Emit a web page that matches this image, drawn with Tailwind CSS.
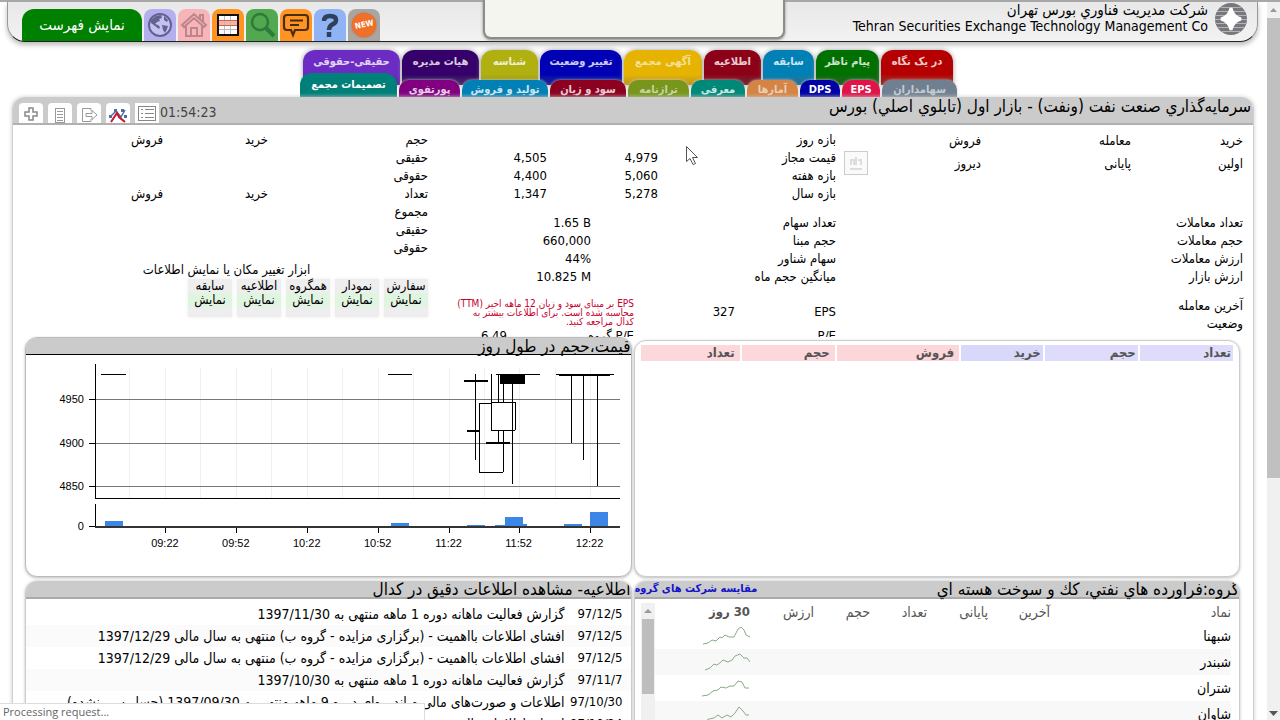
<!DOCTYPE html>
<html lang="fa">
<head>
    <meta charset="UTF-8">
    <meta name="viewport" content="width=device-width, initial-scale=1.0">
    <title>سرمایه‌گذاری صنعت نفت (ونفت)</title>
    <script src="https://cdn.jsdelivr.net/npm/@tailwindcss/browser@4"></script>
</head>
<body class="relative flex h-screen overflow-hidden bg-white text-black text-[13px] leading-[18px] font-['DejaVu_Sans_Condensed','DejaVu_Sans',sans-serif]">

    <div class="flex-1 min-w-0 overflow-hidden border-t-2 border-[#a8a8a8]">

        <!-- Top bar -->
        <header class="ml-[7px] mr-[9px] h-10 flex items-end justify-between pl-[14px] pr-[9px] bg-linear-to-b from-[#e8e8e8] to-[#f2f2f2] border border-t-0 border-[#999] border-b-[#222] rounded-b-[18px] shadow-[0_3px_5px_#bbb]">
            <nav class="flex items-end gap-[2px]">
                <button class="w-[120px] h-8 rounded-t-xl bg-[#008000] text-white text-[15px]">نمایش فهرست</button>
                <button aria-label="بازار" class="w-8 h-8 rounded-t-lg bg-[#b4b0f0] flex items-center justify-center">
                    <svg width="26" height="26" viewBox="0 0 26 26"><circle cx="13" cy="13" r="11" fill="#c3c0f2" stroke="#62628e" stroke-width="2"/><path d="M4 8l5-4 5-1 1 3-3 1 1 2-3 1-2 2 3 1 2 2-1 2-4-3-4-3zM17 4l4 4-1 2-3-2zM15 13l6 1-1 3-2 4-2-3z" fill="#62628e"/></svg>
                </button>
                <button aria-label="خانه" class="w-8 h-8 rounded-t-lg bg-[#f7b5ba] flex items-center justify-center">
                    <svg width="28" height="28" viewBox="0 0 28 28" fill="none" stroke="#bd868b" stroke-width="2"><path d="M2 14L14 3l12 11-2 2L14 7 4 16zM6 15v10h16V15M20 8V4h3v7"/><path d="M11 25v-8h6v8"/></svg>
                </button>
                <button aria-label="جدول" class="w-8 h-8 rounded-t-lg bg-[#ff9423] flex items-center justify-center">
                    <svg width="22" height="22" viewBox="0 0 22 22"><rect x="1" y="1" width="20" height="20" fill="#fff" stroke="#111" stroke-width="2"/><path d="M2 7h18v4H2z" fill="#f3b5a5"/><path d="M7.500 2v18M13.500 2v18M2 15.500h18" stroke="#bbb"/><path d="M2 6.500h18M2 11.500h18" stroke="#d4624c"/></svg>
                </button>
                <button aria-label="جستجو" class="w-8 h-8 rounded-t-lg bg-[#51a851] flex items-center justify-center">
                    <svg width="28" height="28" viewBox="0 0 28 28" fill="none" stroke="#2f7a38"><circle cx="12" cy="11" r="8" stroke-width="2.500"/><path d="M18 17l8 8" stroke-width="4"/></svg>
                </button>
                <button aria-label="پیام" class="w-8 h-8 rounded-t-lg bg-[#ff9423] flex items-center justify-center">
                    <svg width="28" height="28" viewBox="0 0 28 28" fill="none" stroke="#4a2c10" stroke-width="2.200"><path d="M5 4h18q3 0 3 3v9q0 3-3 3H13l-2 5-2-5H5q-3 0-3-3V7q0-3 3-3z"/><path d="M8 9.500h13M8 14h9"/></svg>
                </button>
                <button aria-label="راهنما" class="w-8 h-8 rounded-t-lg bg-[#8fb3f5] flex items-center justify-center">
                    <svg width="24" height="28" viewBox="0 0 24 28" fill="none" stroke="#30405c" stroke-width="4.500"><path d="M6 10q0-5 6-5t6 4q0 3-3 4-4 2-4 6"/><path d="M11 21v5"/></svg>
                </button>
                <button aria-label="جدید" class="w-8 h-8 rounded-t-lg bg-[#a9a5a3] flex items-center justify-center">
                    <span class="w-6 h-6 rounded-full bg-[#f0702a] shadow-[0_0_2px_#c50] flex items-center justify-center"><span class="-rotate-12 text-white text-[8px] font-bold">NEW</span></span>
                </button>
            </nav>
            <div class="flex items-start gap-[6px] h-full">
                <div dir="rtl" class="text-[14px] leading-4">
                    <p class="text-[15px]">شرکت مدیریت فناوري بورس تهران</p>
                    <p dir="ltr">Tehran Securities Exchange Technology Management Co</p>
                </div>
                <svg width="34" height="34" viewBox="0 0 34 34"><circle cx="17" cy="17" r="16" fill="#77777d"/><path d="M3 9.500h28M1 13.500h32M1 17.500h32M1 21.500h32M3 25.500h28M7 5.500h20M8 29.500h18" stroke="#b4b4b8"/><path d="M17 6q2 9 10 11-8 2-10 11-2-9-10-11 8-2 10-11z" fill="#fff" stroke="#fff" stroke-width="3"/></svg>
            </div>
        </header>

        <!-- Tabs -->
        <nav class="mt-2 ml-[300px] w-[657px] text-[11px] font-bold text-white/80 whitespace-nowrap">
            <div class="flex gap-[2px] ml-[3px] h-[35px]">
                <button class="w-[97px] pb-3 rounded-t-xl bg-linear-to-b from-[#6c2cc4] from-70% to-[#5a2a9c] shadow-[0_0_5px_#999]">حقیقی-حقوقی</button>
                <button class="w-[77px] pb-3 rounded-t-xl bg-linear-to-b from-[#35006a] from-70% to-[#4b2c68] shadow-[0_0_5px_#999]">هیات مدیره</button>
                <button class="w-[57px] pb-3 rounded-t-xl bg-linear-to-b from-[#b0b010] from-70% to-[#8c8c1c] shadow-[0_0_5px_#999]">شناسه</button>
                <button class="w-[82px] pb-3 rounded-t-xl bg-linear-to-b from-[#0000b4] from-70% to-[#20208c] shadow-[0_0_5px_#999]">تغییر وضعیت</button>
                <button class="w-[78px] pb-3 rounded-t-xl bg-linear-to-b from-[#e6b400] from-70% to-[#b8941c] shadow-[0_0_5px_#999] text-white/60">آگهی مجمع</button>
                <button class="w-[57px] pb-3 rounded-t-xl bg-linear-to-b from-[#8c0018] from-70% to-[#6c2430] shadow-[0_0_5px_#999]">اطلاعیه</button>
                <button class="w-[51px] pb-3 rounded-t-xl bg-linear-to-b from-[#0080b4] from-70% to-[#286c8c] shadow-[0_0_5px_#999]">سابقه</button>
                <button class="w-[63px] pb-3 rounded-t-xl bg-linear-to-b from-[#007000] from-70% to-[#245c24] shadow-[0_0_5px_#999]">پیام ناظر</button>
                <button class="w-[72px] pb-3 rounded-t-xl bg-linear-to-b from-[#b40000] from-70% to-[#8c2828] shadow-[0_0_5px_#999]">در یک نگاه</button>
            </div>
            <div class="relative flex items-end gap-[2px] -mt-3 h-6 leading-[14px]">
                <button class="w-[97px] h-full rounded-t-xl bg-[#008078] text-white">تصمیمات مجمع</button>
                <button class="w-[61px] h-[17px] pt-[3px] rounded-t-[10px] bg-[#800080] shadow-[0_0_3px_#ccc]">پورتفوی</button>
                <button class="w-[86px] h-[17px] pt-[3px] rounded-t-[10px] bg-[#0080b4] shadow-[0_0_3px_#ccc]">تولید و فروش</button>
                <button class="w-[76px] h-[17px] pt-[3px] rounded-t-[10px] bg-[#8c0020] shadow-[0_0_3px_#ccc]">سود و زیان</button>
                <button class="w-[61px] h-[17px] pt-[3px] rounded-t-[10px] bg-[#78961c] shadow-[0_0_3px_#ccc] text-white/60">ترازنامه</button>
                <button class="w-[54px] h-[17px] pt-[3px] rounded-t-[10px] bg-[#008878] shadow-[0_0_3px_#ccc]">معرفی</button>
                <button class="w-[51px] h-[17px] pt-[3px] rounded-t-[10px] bg-[#d48444] shadow-[0_0_3px_#ccc] text-white/60">آمارها</button>
                <button class="w-[40px] h-[17px] pt-[3px] rounded-t-[10px] bg-[#0000a4] text-white shadow-[0_0_3px_#ccc]">DPS</button>
                <button class="w-[38px] h-[17px] pt-[3px] rounded-t-[10px] bg-[#e01448] text-white shadow-[0_0_3px_#ccc]">EPS</button>
                <button class="w-[75px] h-[17px] pt-[3px] rounded-t-[10px] bg-[#708090] shadow-[0_0_3px_#ccc] text-white/60">سهامداران</button>
            </div>
        </nav>

        <!-- Instrument window -->
        <main class="relative ml-3 mr-[13px] border-x border-[#d0d0d0] rounded-t-xl shadow-[0_0_4px_#ccc]">
            <div class="flex justify-between h-7 bg-[#cbcbcb] border-b-2 border-[#b0b0b0] rounded-t-xl pl-[6px] pr-[2px]">
                <div class="flex items-end gap-[5px]">
                    <button aria-label="افزودن" class="w-6 h-5 rounded-t-sm bg-white flex items-center justify-center"><svg width="16" height="16" viewBox="0 0 16 16" fill="none" stroke="#888" stroke-width="1.500"><path d="M6 3h4v4h4v4h-4v4H6v-4H2V7h4z"/></svg></button>
                    <button aria-label="ماشین حساب" class="w-6 h-5 rounded-t-sm bg-white flex items-end justify-center"><svg width="12" height="16" viewBox="0 0 12 16" fill="none" stroke="#999"><rect x="1.500" y="1.500" width="9" height="14"/><path d="M3 4.500h6M3 7.500h6M3 10.500h6M3 13.500h6"/></svg></button>
                    <button aria-label="خروجی" class="w-6 h-5 rounded-t-sm bg-white flex items-end justify-center"><svg width="18" height="16" viewBox="0 0 18 16" fill="none" stroke="#999"><path d="M11 4V1.500H2.500v13H11V12"/><path d="M6 6.500h6v-3l5 4.500-5 4.500v-3H6z"/></svg></button>
                    <button aria-label="نمودار" class="w-6 h-5 rounded-t-sm bg-white flex items-end justify-center"><svg width="18" height="16" viewBox="0 0 18 16" fill="none"><path d="M2 9L7 4l5 6 4-7" stroke="#4a6ea8" stroke-width="1.500"/><path d="M2 15l6-9 2 4 6 5" stroke="#c8142c" stroke-width="2"/><path d="M0 8h3v3H0zM5 2h3v3H5zM12 2h3v3h-3zM15 8h3v3h-3z" fill="#4a6ea8"/></svg></button>
                    <button aria-label="فهرست" class="w-6 h-5 bg-white flex items-center justify-center"><svg width="20" height="17" viewBox="0 0 20 17" fill="none" stroke="#888"><rect x="1.500" y="1.500" width="17" height="14"/><path d="M4 4.500h2M4 8.500h2M4 12.500h2M8 4.500h9M8 8.500h9M8 12.500h9"/></svg></button>
                    <span class="text-[14px] leading-[22px] text-[#444] -ml-1">01:54:23</span>
                </div>
                <h1 dir="rtl" class="text-[17px] leading-[18px]">سرمایه‌گذاري صنعت نفت (ونفت) - بازار اول (تابلوي اصلي) بورس</h1>
            </div>

            <!-- Summary -->
            <section dir="rtl" class="grid grid-cols-[399fr_400fr_403fr] gap-x-2 h-[212px] overflow-hidden pt-1 pr-[10px] pl-3">
                <div>
                    <div class="flex">
                        <table class="flex-1 table-fixed">
                            <tr class="h-[22px]"><td class="w-[112px]">خرید</td><td class="w-[150px]">معامله</td><td class="w-[113px]">فروش</td></tr>
                            <tr class="h-[22px]"><td>اولین</td><td>پایانی</td><td>دیروز</td></tr>
                        </table>
                        <button aria-label="نمودار کوچک" class="mt-[22px] w-6 h-6 border border-[#ccc] bg-[#fafafa] flex items-center justify-center"><svg width="16" height="16" viewBox="0 0 16 16" fill="none" stroke="#ddd" stroke-width="2"><path d="M3 10V5h3v5M8 10V2M13 10V5h-3M2 14h12"/></svg></button>
                    </div>
                    <table class="mt-[39px]">
                        <tr><td>تعداد معاملات</td></tr>
                        <tr><td>حجم معاملات</td></tr>
                        <tr><td>ارزش معاملات</td></tr>
                        <tr><td>ارزش بازار</td></tr>
                    </table>
                    <table class="mt-[11px]">
                        <tr><td>آخرین معامله</td></tr>
                        <tr><td>وضعیت</td></tr>
                    </table>
                </div>
                <div class="pt-[2px]">
                    <table>
                        <tr><td class="w-[178px]">بازه روز</td><td class="w-[111px]"></td><td></td></tr>
                        <tr><td>قیمت مجاز</td><td>4,979</td><td>4,505</td></tr>
                        <tr><td>بازه هفته</td><td>5,060</td><td>4,400</td></tr>
                        <tr><td>بازه سال</td><td>5,278</td><td>1,347</td></tr>
                    </table>
                    <table class="mt-[11px]">
                        <tr><td class="w-[245px]">تعداد سهام</td><td><bdi dir="ltr">1.65 B</bdi></td></tr>
                        <tr><td>حجم مبنا</td><td>660,000</td></tr>
                        <tr><td>سهام شناور</td><td><bdi dir="ltr">44%</bdi></td></tr>
                        <tr><td>میانگین حجم ماه</td><td><bdi dir="ltr">10.825 M</bdi></td></tr>
                    </table>
                    <table class="mt-[11px] w-full table-fixed">
                        <colgroup><col class="w-[101px]"><col class="w-[101px]"><col class="w-[127px]"><col></colgroup>
                        <tr class="h-[30px]"><td>EPS</td><td>327</td><td colspan="2" class="text-[10px] leading-[9px] text-[#c8002c]">EPS بر مبنای سود و زیان 12 ماهه اخیر (TTM)<br>محاسبه شده است. برای اطلاعات بیشتر به<br>کدال مراجعه کنید.</td></tr>
                        <tr><td>P/E</td><td></td><td>P/E گروه</td><td>6.49</td></tr>
                    </table>
                </div>
                <div class="pt-[2px]">
                    <table>
                        <tr><td class="w-[160px]">حجم</td><td class="w-[105px]">خرید</td><td>فروش</td></tr>
                        <tr><td>حقیقی</td></tr>
                        <tr><td>حقوقی</td></tr>
                        <tr><td>تعداد</td><td>خرید</td><td>فروش</td></tr>
                        <tr><td>مجموع</td></tr>
                        <tr><td>حقیقی</td></tr>
                        <tr><td>حقوقی</td></tr>
                    </table>
                    <p class="mt-1 text-center">ابزار تغییر مکان یا نمایش اطلاعات</p>
                    <div class="flex gap-[5px] leading-[14px]">
                        <button class="w-11 h-[38px] pb-[10px] bg-[#eee] shadow-[0_0_4px_#eee]">سفارش<span class="block bg-[#e0f5e0]">نمایش</span></button>
                        <button class="w-11 h-[38px] pb-[10px] bg-[#eee] shadow-[0_0_4px_#eee]">نمودار<span class="block bg-[#e0f5e0]">نمایش</span></button>
                        <button class="w-11 h-[38px] pb-[10px] bg-[#eee] shadow-[0_0_4px_#eee]">همگروه<span class="block bg-[#e0f5e0]">نمایش</span></button>
                        <button class="w-11 h-[38px] pb-[10px] bg-[#eee] shadow-[0_0_4px_#eee]">اطلاعیه<span class="block bg-[#e0f5e0]">نمایش</span></button>
                        <button class="w-11 h-[38px] pb-[10px] bg-[#eee] shadow-[0_0_4px_#eee]">سابقه<span class="block bg-[#e0f5e0]">نمایش</span></button>
                    </div>
                </div>
            </section>

            <!-- Boxes -->
            <div class="grid grid-cols-2 gap-x-[2px] gap-y-1 ml-3 mr-[13px]">
                <section class="bg-white border border-[#bbb] rounded-xl shadow-[0_1px_3px_#bbb] overflow-hidden">
                    <h2 dir="rtl" class="h-[17px] text-[17px] leading-4 bg-[#cbcbcb] border-b border-black">قیمت،حجم در طول روز</h2>
                    <svg class="block w-full mt-px" viewBox="0 0 605 220" shape-rendering="crispEdges" fill="none" stroke="#000" font-family="Liberation Sans" font-size="11">
                        <path stroke="#f0f0f0" d="M103.500 12v130M139.500 12v130M174.500 12v130M210.500 12v130M245.500 12v130M281.500 12v130M316.500 12v130M352.500 12v130M387.500 12v130M423.500 12v130M458.500 12v130M493.500 12v130M529.500 12v130M564.500 12v130"/>
                        <path stroke="#777" d="M70 43.500h524M70 87.500h524M70 130.500h524"/>
                        <path d="M69.500 8v134M69 142.500h525M63 43.500h7M63 87.500h7M63 130.500h7M69.500 148v23M63 170.500h7M139.500 171v6M210.500 171v6M281.500 171v6M352.500 171v6M423.500 171v6M493.500 171v6M564.500 171v6"/>
                        <g fill="#3c86e8" stroke="none"><path d="M79 165h18v5H79zM365 167h18v4h-18zM441 169h18v2h-18zM469 169h18v2h-18zM479 161h18v10h-18zM497 168h4v3h-4zM538 168h18v3h-18zM564 156h18v15h-18z"/></g>
                        <path stroke="#333" stroke-width="2" d="M69 171h525"/>
                        <path d="M75 18.500h25M362 18.500h24M449.500 18v86M465.500 18v28M472.500 18v28M477.500 18v28M472.500 74v13M477.500 74v13M470 18.500h44M530 18.500h58M545.500 19v68M557.500 19v85M571.500 19v111"/>
                        <path d="M453.500 47.500h24v69h-24z"/>
                        <path fill="#fff" d="M465.500 46.500h24v28h-24z"/>
                        <path d="M486.500 18v110"/>
                        <path stroke-width="2" d="M438 25h24M441 75h12M460 87h24M533 19h51"/>
                        <path fill="#000" stroke="none" d="M474 19h25v9h-25z"/>
                        <g fill="#000" stroke="none" text-anchor="end"><text x="58" y="47">4950</text><text x="58" y="91">4900</text><text x="58" y="134">4850</text><text x="58" y="174">0</text></g>
                        <g fill="#000" stroke="none" text-anchor="middle"><text x="139" y="191">09:22</text><text x="210" y="191">09:52</text><text x="281" y="191">10:22</text><text x="352" y="191">10:52</text><text x="423" y="191">11:22</text><text x="493" y="191">11:52</text><text x="564" y="191">12:22</text></g>
                    </svg>
                </section>

                <section dir="rtl" class="bg-white border border-[#ccc] rounded-xl shadow-[0_1px_3px_#bbb] mt-[3px]">
                    <table class="w-full border-separate border-spacing-x-[2px] border-spacing-y-1 px-1 table-fixed text-[13px] leading-4 text-[#555]">
                        <tr class="text-right">
                            <th class="w-[16%] pr-[2px] bg-[#dedcfa]">تعداد</th>
                            <th class="w-[16%] pr-[2px] bg-[#dedcfa]">حجم</th>
                            <th class="w-[14%] pr-[2px] bg-[#d8d8fa]">خرید</th>
                            <th class="w-[21%] pr-[5px] bg-[#fcd6d8]">فروش</th>
                            <th class="w-[16%] pr-[5px] bg-[#fcd8dc]">حجم</th>
                            <th class="w-[17%] pr-[5px] bg-[#fcd8dc]">تعداد</th>
                        </tr>
                    </table>
                </section>

                <section dir="rtl" class="bg-white border-x border-[#ccc] rounded-t-xl shadow-[0_0_3px_#bbb] overflow-hidden h-[180px]">
                    <h2 class="h-[18px] text-[17px] leading-4 bg-[#cbcbcb] border-b-2 border-[#aaa]">اطلاعیه- مشاهده اطلاعات دقیق در کدال</h2>
                    <table class="w-full mt-1 whitespace-nowrap table-fixed text-[14px]">
                        <tr class="h-[22px]"><td class="w-[66px] pr-2 text-[13px]">97/12/5</td><td>گزارش فعالیت ماهانه دوره 1 ماهه منتهی به 1397/11/30</td></tr>
                        <tr class="h-[22px] bg-[#fbfbfb]"><td class="pr-2 text-[13px]">97/12/5</td><td>افشای اطلاعات بااهمیت - (برگزاری مزایده - گروه ب) منتهی به سال مالی 1397/12/29</td></tr>
                        <tr class="h-[22px]"><td class="pr-2 text-[13px]">97/12/5</td><td>افشای اطلاعات بااهمیت - (برگزاری مزایده - گروه ب) منتهی به سال مالی 1397/12/29</td></tr>
                        <tr class="h-[22px] bg-[#fbfbfb]"><td class="pr-2 text-[13px]">97/11/7</td><td>گزارش فعالیت ماهانه دوره 1 ماهه منتهی به 1397/10/30</td></tr>
                        <tr class="h-[22px]"><td class="pr-2 text-[13px]">97/10/30</td><td>اطلاعات و صورت‌های مالی میاندوره‌ای دوره 9 ماهه منتهی به 1397/09/30 (حسابرسی نشده)</td></tr>
                        <tr class="h-[22px]"><td class="pr-2 text-[13px]">97/10/24</td><td>افشای اطلاعات بااهمیت</td></tr>
                    </table>
                </section>

                <section dir="rtl" class="bg-white border-x border-[#ccc] rounded-t-xl shadow-[0_0_3px_#bbb] overflow-hidden h-[180px]">
                    <div class="flex justify-between h-[18px] leading-4 bg-[#cbcbcb] border-b-2 border-[#aaa]">
                        <h2 class="text-[17px]">گروه:فراورده هاي نفتي، كك و سوخت هسته اي</h2>
                        <a href="#" class="text-[11px] font-bold text-[#1414c8]">مقایسه شرکت های گروه</a>
                    </div>
                    <div class="flex">
                        <table class="flex-1 mr-2 mt-[2px] table-fixed text-right text-[14px]">
                            <thead class="text-[#555]">
                                <tr class="h-[22px]"><th class="w-[181px] font-normal">نماد</th><th class="w-[62px] font-normal">آخرین</th><th class="w-[61px] font-normal">پایانی</th><th class="w-[57px] font-normal">تعداد</th><th class="w-[56px] font-normal">حجم</th><th class="w-[64px] font-normal">ارزش</th><th class="text-[13px] font-bold">30 روز</th></tr>
                            </thead>
                            <tbody>
                                <tr class="h-[26px]"><td colspan="6">شبهنا</td><td><svg width="48" height="18" viewBox="0 0 48 18" fill="none" stroke="#86ac86"><path d="M1 17l5-1 4-3 4 1 4-4 2 1 3-3 4 2 5 0 4-8 3-2 3 3 2 5 4 2"/></svg></td></tr>
                                <tr class="h-[26px] bg-[#f8f8f8]"><td colspan="6">شبندر</td><td><svg width="48" height="18" viewBox="0 0 48 18" fill="none" stroke="#86ac86"><path d="M3 17l5-2 4-4 3 1 4-3 2-2 5 2 4-2 3-4 5-2 4 4 3 0 3 4"/></svg></td></tr>
                                <tr class="h-[26px]"><td colspan="6">شتران</td><td><svg width="48" height="18" viewBox="0 0 48 18" fill="none" stroke="#86ac86"><path d="M0 17l6-1 5-4 5-1 3-3 5 1 4-2 4 0 4-5 4 1 3 6 4 0"/></svg></td></tr>
                                <tr class="h-[26px] bg-[#f8f8f8]"><td colspan="6">شاوان</td><td><svg width="48" height="18" viewBox="0 0 48 18" fill="none" stroke="#86ac86"><path d="M2 17l5-3 5-1 4-3 4 3 5-3 4 2 4-4 4-6 4 4 3 4 3 0"/></svg></td></tr>
                            </tbody>
                        </table>
                        <div class="w-[14px] ml-[6px] mt-1 bg-[#f0f0f0]">
                            <svg class="block" width="14" height="16" viewBox="0 0 14 16"><path d="M3 10l4-4 4 4z" fill="#999"/></svg>
                            <div class="h-[75px] mx-px bg-[#bebebe]"></div>
                        </div>
                    </div>
                </section>
            </div>
        </main>
    </div>

    <!-- Window scroll bar -->
    <div class="w-[13px] flex flex-col items-center bg-[#f0f0f0] border-t-2 border-[#a8a8a8]">
        <svg class="shrink-0" width="13" height="16" viewBox="0 0 13 16"><path d="M3 10l3.500-4 3.500 4z" fill="#999"/></svg>
        <div class="w-full h-[460px] bg-[#c0c0c0]"></div>
        <svg class="mt-auto shrink-0" width="13" height="16" viewBox="0 0 13 16"><path d="M2 7l4.500 5L11 7z" fill="#555"/></svg>
    </div>

    <!-- Notice box, pointer and status text lie over the page -->
    <div class="absolute left-[483px] top-0 w-[302px] h-[39px] bg-[#f5f5f0] border-2 border-t-0 border-[#8c8c8c] rounded-b-lg shadow-[0_1px_3px_#888]"></div>
    <svg class="absolute left-[685px] top-[145px]" width="14" height="21" viewBox="0 0 14 21"><path d="M1.500 1.500v15l3.500-3 3 6 2.500-1-3-6h5z" fill="#fff" stroke="#555"/></svg>
    <div class="absolute left-0 bottom-0 w-[425px] h-[17px] pl-[3px] bg-white border-t border-r border-[#ddd] text-[11px] leading-4 text-[#666] font-['Open_Sans',sans-serif]">Processing request...</div>

</body>
</html>
